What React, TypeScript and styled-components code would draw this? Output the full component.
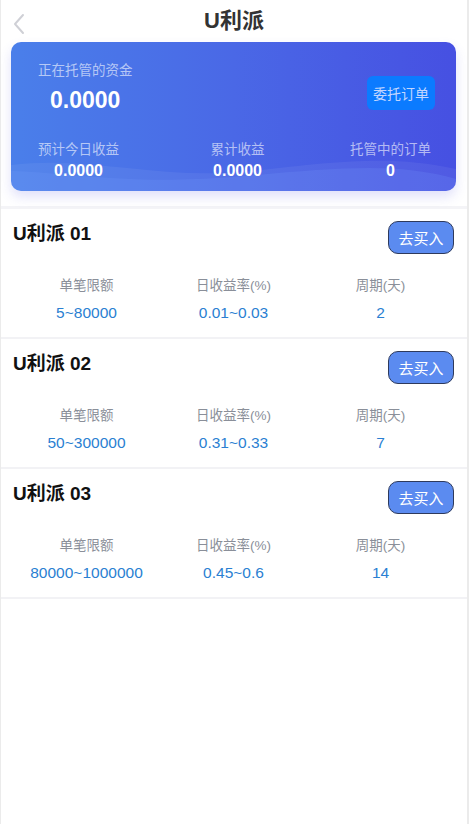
import React from "react";
import styled, { createGlobalStyle } from "styled-components";

const Global = createGlobalStyle`
  html, body { margin: 0; padding: 0; background: #ebebeb; }
  body { font-family: "Liberation Sans", "Noto Sans CJK SC", Arial, sans-serif; }
  * { box-sizing: border-box; }
`;

const Page = styled.div`
  width: 466px;
  margin-left: 1px;
  min-height: 824px;
  background: #ffffff;
  display: flex;
  flex-direction: column;
`;

const Header = styled.div`
  height: 42px;
  display: flex;
  align-items: center;
  justify-content: center;
  position: relative;
`;

const Back = styled.div`
  position: absolute;
  left: 10px;
  top: 12px;
  width: 16px;
  height: 24px;
  display: flex;
`;

const Title = styled.h1`
  margin: 0;
  font-size: 22px;
  font-weight: 700;
  color: #333333;
  line-height: 1;
`;

const Summary = styled.div`
  margin: 0 11px 0 10px;
  height: 149px;
  border-radius: 10px;
  background: linear-gradient(90deg, #4a7fea 0%, #4a68e6 50%, #4650e2 100%);
  box-shadow: 0 6px 12px rgba(90, 90, 230, 0.18);
  position: relative;
  overflow: hidden;
  display: flex;
  flex-direction: column;
  padding: 20px 21px 0 27px;
  color: #ffffff;
`;

const Wave = styled.svg`
  position: absolute;
  left: 0;
  bottom: 0;
  width: 100%;
  height: 40px;
`;

const TopRow = styled.div`
  display: flex;
  justify-content: space-between;
  align-items: flex-start;
  position: relative;
`;

const Held = styled.div`
  display: flex;
  flex-direction: column;
  align-items: center;
`;

const HeldLabel = styled.div`
  font-size: 13.5px;
  color: rgba(255, 255, 255, 0.6);
  line-height: 18px;
`;

const HeldValue = styled.div`
  font-size: 23px;
  font-weight: 700;
  line-height: 28px;
  margin-top: 6px;
`;

const OrderBtn = styled.div`
  margin-top: 14px;
  width: 68px;
  height: 34px;
  border-radius: 6px;
  background: #0b7bff;
  color: #c3d6ff;
  font-size: 14px;
  display: flex;
  align-items: center;
  justify-content: center;
`;

const StatRow = styled.div`
  display: flex;
  justify-content: space-between;
  margin-top: 27px;
  padding-right: 4px;
  position: relative;
`;

const Stat = styled.div<{ $shift?: number }>`
  display: flex;
  flex-direction: column;
  align-items: center;
  margin-left: ${(p) => p.$shift ?? 0}px;
`;

const StatLabel = styled.div`
  font-size: 13.5px;
  color: rgba(255, 255, 255, 0.6);
  line-height: 18px;
`;

const StatValue = styled.div`
  font-size: 16px;
  font-weight: 700;
  line-height: 20px;
  margin-top: 2px;
`;

const List = styled.div`
  margin-top: 15px;
  display: flex;
  flex-direction: column;
  border-top: 3px solid #f4f4f7;
`;

const Item = styled.div`
  height: 130px;
  border-bottom: 2px solid #f2f2f5;
  padding: 13px 13px 0 12px;
  display: flex;
  flex-direction: column;
`;

const ItemHead = styled.div`
  display: flex;
  justify-content: space-between;
  align-items: flex-start;
`;

const ItemName = styled.div`
  font-size: 19px;
  font-weight: 700;
  color: #111111;
  line-height: 24px;
`;

const BuyBtn = styled.div`
  width: 66px;
  height: 33px;
  border-radius: 10px;
  border: 1.5px solid #2e3a5c;
  background: #5b8bf0;
  color: #ffffff;
  font-size: 15px;
  display: flex;
  align-items: center;
  justify-content: center;
  margin-top: -1px;
`;

const Metrics = styled.div`
  display: grid;
  grid-template-columns: repeat(3, 1fr);
  margin-top: 23px;
`;

const Metric = styled.div`
  display: flex;
  flex-direction: column;
  align-items: center;
`;

const MetricLabel = styled.div`
  font-size: 13.5px;
  color: #8a8f99;
  line-height: 18px;
`;

const MetricValue = styled.div`
  font-size: 15.5px;
  color: #2a7fd2;
  line-height: 20px;
  margin-top: 8px;
`;

const products = [
  { name: "U利派 01", limit: "5~80000", rate: "0.01~0.03", days: "2" },
  { name: "U利派 02", limit: "50~300000", rate: "0.31~0.33", days: "7" },
  { name: "U利派 03", limit: "80000~1000000", rate: "0.45~0.6", days: "14" },
];

export default function App() {
  return (
    <>
      <Global />
      <Page>
        <Header>
          <Back>
            <svg width="16" height="24" viewBox="0 0 16 24">
              <path d="M12 3 L4 12 L12 21" fill="none" stroke="#cfd0d6" strokeWidth="2" strokeLinecap="round" strokeLinejoin="round" />
            </svg>
          </Back>
          <Title>U利派</Title>
        </Header>
        <Summary>
          <Wave viewBox="0 0 444 40" preserveAspectRatio="none">
            <path d="M0 14 C 80 4, 150 30, 240 20 S 380 4, 444 18 L444 40 L0 40 Z" fill="rgba(255,255,255,0.06)" />
            <path d="M0 20 C 60 22, 120 34, 220 26 S 380 10, 444 28 L444 40 L0 40 Z" fill="rgba(120,160,255,0.18)" />
          </Wave>
          <TopRow>
            <Held>
              <HeldLabel>正在托管的资金</HeldLabel>
              <HeldValue>0.0000</HeldValue>
            </Held>
            <OrderBtn>委托订单</OrderBtn>
          </TopRow>
          <StatRow>
            <Stat>
              <StatLabel>预计今日收益</StatLabel>
              <StatValue>0.0000</StatValue>
            </Stat>
            <Stat $shift={6}>
              <StatLabel>累计收益</StatLabel>
              <StatValue>0.0000</StatValue>
            </Stat>
            <Stat>
              <StatLabel>托管中的订单</StatLabel>
              <StatValue>0</StatValue>
            </Stat>
          </StatRow>
        </Summary>
        <List>
          {products.map((p) => (
            <Item key={p.name}>
              <ItemHead>
                <ItemName>{p.name}</ItemName>
                <BuyBtn>去买入</BuyBtn>
              </ItemHead>
              <Metrics>
                <Metric>
                  <MetricLabel>单笔限额</MetricLabel>
                  <MetricValue>{p.limit}</MetricValue>
                </Metric>
                <Metric>
                  <MetricLabel>日收益率(%)</MetricLabel>
                  <MetricValue>{p.rate}</MetricValue>
                </Metric>
                <Metric>
                  <MetricLabel>周期(天)</MetricLabel>
                  <MetricValue>{p.days}</MetricValue>
                </Metric>
              </Metrics>
            </Item>
          ))}
        </List>
      </Page>
    </>
  );
}
